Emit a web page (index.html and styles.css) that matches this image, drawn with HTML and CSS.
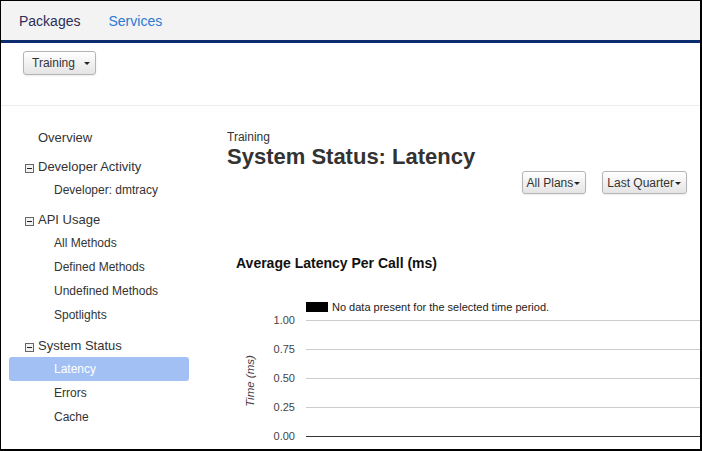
FILE: index.html
```html
<!DOCTYPE html>
<html>
<head>
<meta charset="utf-8">
<link rel="stylesheet" href="styles.css">
</head>
<body>
<div class="frame">
  <header class="topnav">
    <a class="nav-link nav-current">Packages</a>
    <a class="nav-link nav-alt">Services</a>
  </header>
  <div class="toolbar">
    <button class="btn btn-env">Training<span class="caret"></span></button>
  </div>
  <div class="layout">
    <nav class="sidebar">
      <div class="item top plain">Overview</div>
      <div class="item top"><svg class="toggle" viewBox="0 0 9 9"><rect x="0.5" y="0.5" width="8" height="8" fill="#f2f2f2" stroke="#666"/><path d="M2 4.5h5" stroke="#222"/></svg>Developer Activity</div>
      <div class="item sub">Developer: dmtracy</div>
      <div class="item top"><svg class="toggle" viewBox="0 0 9 9"><rect x="0.5" y="0.5" width="8" height="8" fill="#f2f2f2" stroke="#666"/><path d="M2 4.5h5" stroke="#222"/></svg>API Usage</div>
      <div class="item sub">All Methods</div>
      <div class="item sub">Defined Methods</div>
      <div class="item sub">Undefined Methods</div>
      <div class="item sub">Spotlights</div>
      <div class="item top section-last"><svg class="toggle" viewBox="0 0 9 9"><rect x="0.5" y="0.5" width="8" height="8" fill="#f2f2f2" stroke="#666"/><path d="M2 4.5h5" stroke="#222"/></svg>System Status</div>
      <div class="item sub active">Latency</div>
      <div class="item sub">Errors</div>
      <div class="item sub">Cache</div>
    </nav>
    <main class="content">
      <div class="crumb">Training</div>
      <h1 class="title">System Status: Latency</h1>
      <div class="filters">
        <button class="btn btn-sm">All Plans<span class="caret caret-tight"></span></button>
        <button class="btn btn-sm">Last Quarter<span class="caret caret-tight"></span></button>
      </div>
      <h2 class="chart-title">Average Latency Per Call (ms)</h2>
      <svg class="chart" width="460" height="158" viewBox="0 0 460 158">
        <rect x="66" y="13" width="22" height="10" fill="#000"/>
        <text x="92" y="22" class="legend">No data present for the selected time period.</text>
        <line x1="66" x2="460" y1="31.5" y2="31.5" stroke="#cccccc"/>
        <line x1="66" x2="460" y1="60.5" y2="60.5" stroke="#cccccc"/>
        <line x1="66" x2="460" y1="89.5" y2="89.5" stroke="#cccccc"/>
        <line x1="66" x2="460" y1="118.5" y2="118.5" stroke="#cccccc"/>
        <line x1="66" x2="460" y1="147.5" y2="147.5" stroke="#333333"/>
        <text x="55" y="35" class="tick">1.00</text>
        <text x="55" y="64" class="tick">0.75</text>
        <text x="55" y="93" class="tick">0.50</text>
        <text x="55" y="122" class="tick">0.25</text>
        <text x="55" y="151" class="tick">0.00</text>
        <text class="axis-title" transform="translate(14 92) rotate(-90)">Time (ms)</text>
      </svg>
    </main>
  </div>
</div>
</body>
</html>
```

FILE: styles.css
```css
* { box-sizing: border-box; }
html, body { margin: 0; padding: 0; background: #fff; }
body { font-family: "Liberation Sans", Arial, sans-serif; color: #333; }

.frame {
  width: 702px;
  height: 451px;
  border-top: 1px solid #000;
  border-left: 1px solid #000;
  border-right: 2px solid #000;
  border-bottom: 2px solid #000;
  overflow: hidden;
  display: flex;
  flex-direction: column;
}

.topnav {
  height: 42px;
  background: #f3f3f3;
  border-bottom: 3px solid #0b2d6f;
  display: flex;
  align-items: center;
  padding-left: 18px;
  gap: 28px;
}
.nav-link { font-size: 14px; line-height: 16px; text-decoration: none; }
.nav-current { color: #2b2e57; }
.nav-alt { color: #2b7ad3; }

.toolbar {
  height: 63px;
  border-bottom: 1px solid #ececec;
  padding: 8px 0 0 22px;
}

.btn {
  font-family: "Liberation Sans", Arial, sans-serif;
  color: #333;
  background: linear-gradient(#ffffff, #e4e4e4);
  border: 1px solid #b4b4b4;
  border-radius: 3px;
  box-shadow: 0 1px 2px rgba(0,0,0,0.08);
  display: inline-flex;
  align-items: center;
  margin: 0;
}
.btn-env {
  height: 24px;
  width: 73px;
  padding: 0 0 0 8px;
  font-size: 12px;
}
.btn-sm {
  height: 23px;
  padding: 0 5px 0 4px;
  font-size: 12px;
}
.caret {
  display: inline-block;
  width: 0;
  height: 0;
  border-top: 3px solid #222;
  border-left: 3px solid transparent;
  border-right: 3px solid transparent;
  margin-left: 9px;
  margin-top: 1px;
}
.caret-tight { margin-left: 1px; }

.layout { display: flex; flex: 1; min-height: 0; }

.sidebar {
  width: 188px;
  padding: 19px 0 0 8px;
  flex: none;
}
.item {
  width: 180px;
  height: 24px;
  display: flex;
  align-items: center;
  white-space: nowrap;
}
.item.top {
  font-size: 13px;
  margin-top: 5px;
  padding-left: 16px;
}
.item.top.plain { margin-top: 0; padding-left: 29px; }
.item.top.section-last { margin-top: 6px; }
.item.sub {
  font-size: 12px;
  padding-left: 45px;
}
.item.active {
  background: #a2c0f4;
  color: #fff;
  border-radius: 3px;
}
.toggle {
  width: 9px;
  height: 9px;
  margin-right: 4px;
  margin-top: 5px;
  flex: none;
}

.content {
  flex: 1;
  min-width: 0;
  padding: 24px 13px 0 38px;
}
.crumb { font-size: 12px; line-height: 14px; color: #333; }
.title {
  margin: 0;
  font-size: 22px;
  line-height: 26px;
  font-weight: bold;
  color: #333;
}
.filters {
  display: flex;
  justify-content: flex-end;
  gap: 16px;
  padding-top: 1px;
}
.chart-title {
  margin: 61px 0 0 9px;
  font-size: 14px;
  line-height: 16px;
  font-weight: bold;
  color: #111;
}
.chart {
  display: block;
  margin: 18px -13px 0 13px;
  overflow: hidden;
}
.legend { font-size: 11px; fill: #222; font-family: "Liberation Sans", Arial, sans-serif; }
.tick { font-size: 11px; fill: #444; text-anchor: end; font-family: "Liberation Sans", Arial, sans-serif; }
.axis-title { font-size: 11.5px; font-style: italic; fill: #4a3a44; text-anchor: middle; font-family: "Liberation Sans", Arial, sans-serif; }
```
